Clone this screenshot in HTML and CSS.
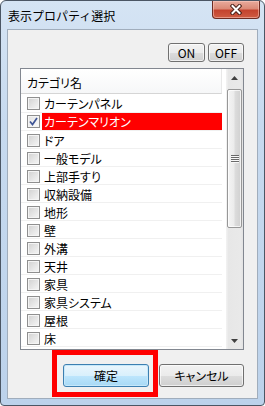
FILE: index.html
```html
<!DOCTYPE html>
<html lang="ja">
<head>
    <meta charset="UTF-8">
    <meta name="viewport" content="width=device-width, initial-scale=1.0">
    <title>表示プロパティ選択</title>
    <link rel="stylesheet" href="styles.css">
</head>
<body>
    <div class="window">
        <div class="titlebar">
            <span class="title">表示プロパティ選択</span>
            <div class="close">
                <svg width="12" height="11" viewBox="0 0 12 11">
                    <path d="M2.5 2 L9.5 9 M9.5 2 L2.5 9" stroke="#4a2018" stroke-width="4" stroke-linecap="square" fill="none"/>
                    <path d="M2.5 2 L9.5 9 M9.5 2 L2.5 9" stroke="#ffffff" stroke-width="2" stroke-linecap="square" fill="none"/>
                </svg>
            </div>
        </div>
        <div class="client">
            <div class="toolbar">
                <button type="button" class="btn btn-on">ON</button>
                <button type="button" class="btn btn-off">OFF</button>
            </div>
            <div class="listbox">
                <div class="list">
                    <div class="list-header">カテゴリ名</div>
                    <div class="row"><span class="check"></span><span class="label">カーテンパネル</span></div>
                    <div class="row selected">
                        <span class="check checked">
                            <svg width="11" height="11" viewBox="0 0 11 11"><path d="M2 5.5 L4.5 8.5 L9 2" stroke="#3f5596" stroke-width="1.7" fill="none"/></svg>
                        </span>
                        <span class="label">カーテンマリオン</span>
                    </div>
                    <div class="row"><span class="check"></span><span class="label">ドア</span></div>
                    <div class="row"><span class="check"></span><span class="label">一般モデル</span></div>
                    <div class="row"><span class="check"></span><span class="label">上部手すり</span></div>
                    <div class="row"><span class="check"></span><span class="label">収納設備</span></div>
                    <div class="row"><span class="check"></span><span class="label">地形</span></div>
                    <div class="row"><span class="check"></span><span class="label">壁</span></div>
                    <div class="row"><span class="check"></span><span class="label">外溝</span></div>
                    <div class="row"><span class="check"></span><span class="label">天井</span></div>
                    <div class="row"><span class="check"></span><span class="label">家具</span></div>
                    <div class="row"><span class="check"></span><span class="label">家具システム</span></div>
                    <div class="row"><span class="check"></span><span class="label">屋根</span></div>
                    <div class="row"><span class="check"></span><span class="label">床</span></div>
                    <div class="row row-empty"></div>
                </div>
                <div class="scrollbar">
                    <div class="sb-btn">
                        <svg width="7" height="4" viewBox="0 0 7 4"><path d="M0 4 L3.5 0 L7 4 Z" fill="#404040"/></svg>
                    </div>
                    <div class="thumb"><span class="grip"></span></div>
                    <div class="track"></div>
                    <div class="sb-btn">
                        <svg width="7" height="4" viewBox="0 0 7 4"><path d="M0 0 L7 0 L3.5 4 Z" fill="#404040"/></svg>
                    </div>
                </div>
            </div>
            <div class="actions">
                <button type="button" class="btn btn-default">確定</button>
                <button type="button" class="btn btn-cancel">キャンセル</button>
            </div>
            <div class="mark"></div>
        </div>
    </div>
</body>
</html>
```

FILE: styles.css
```css
/* Základ okna */
* {
    margin: 0;
    padding: 0;
    box-sizing: border-box;
}
body {
    font-family: "Noto Sans CJK JP", sans-serif;
    font-size: 12px;
    color: #000;
    background-color: #fff;
}
.window {
    width: 265px;
    height: 406px;
    border: 1px solid #4b5664;
    border-radius: 6px 6px 4px 4px;
    background: linear-gradient(180deg, #d5e4f4 0%, #c7daef 30%, #bcd2eb 100%);
    display: flex;
    flex-direction: column;
    overflow: hidden;
}
.titlebar {
    height: 28px;
    display: flex;
    justify-content: space-between;
    padding-left: 7px;
    padding-right: 4px;
}
.title {
    line-height: 28px;
    padding-top: 1px;
    font-size: 12px;
    color: #000;
}
.close {
    width: 48px;
    height: 18px;
    border: 1px solid #6e2c22;
    border-top: none;
    border-radius: 0 0 4px 4px;
    background: linear-gradient(180deg, #e8ab9c 0%, #db8a77 45%, #c4432e 55%, #cf5c43 100%);
    box-shadow: inset 0 0 0 1px rgba(255, 210, 200, 0.5);
    display: flex;
    align-items: center;
    justify-content: center;
}
.client {
    position: relative;
    height: 370px;
    margin: 0 6px;
    border: 1px solid #a0adbc;
    background-color: #f0f0f0;
    padding: 13px 13px 0 12px;
}
.toolbar {
    display: flex;
    justify-content: flex-end;
    gap: 3px;
}
.btn {
    font-family: "Noto Sans CJK JP", sans-serif;
    font-size: 12px;
    color: #000;
    border: 1px solid #707070;
    border-radius: 3px;
    background: linear-gradient(180deg, #f2f2f2 0%, #ebebeb 50%, #dddddd 50%, #cfcfcf 100%);
    box-shadow: inset 0 0 0 1px rgba(255, 255, 255, 0.65);
    cursor: pointer;
}
.btn-on {
    width: 37px;
    height: 19px;
    line-height: 16px;
}
.btn-off {
    width: 36px;
    height: 19px;
    line-height: 16px;
}
.listbox {
    margin-top: 6px;
    height: 282px;
    border: 1px solid #828790;
    background-color: #fff;
    display: flex;
}
.list {
    flex: 1;
    overflow: hidden;
}
.list-header {
    width: 201px;
    height: 25px;
    padding: 4px 0 0 6px;
    line-height: 19px;
    border-bottom: 1px solid #d5d5d5;
    border-right: 1px solid #e8e8e8;
    background: linear-gradient(180deg, #ffffff 0%, #f6f7f8 100%);
    font-feature-settings: "palt" 1;
}
.row {
    width: 201px;
    height: 18px;
    display: flex;
    padding-left: 6px;
}
.row + .row {
    border-top: 1px solid #f0f0f0;
}
.check {
    width: 13px;
    height: 13px;
    margin-top: 3px;
    border: 1px solid #8f8f8f;
    background: linear-gradient(135deg, #d0d0d0 0%, #e4e4e4 50%, #f6f6f6 100%);
    box-shadow: inset 0 0 0 1px #f4f4f4;
    flex-shrink: 0;
}
.check.checked {
    margin-top: 2px;
    background: linear-gradient(135deg, #e2e2e2 0%, #f2f2f2 60%, #fafafa 100%);
}
.check svg {
    display: block;
}
.label {
    flex: 1;
    margin-left: 2px;
    padding-left: 2px;
    line-height: 18px;
    padding-top: 1px;
    white-space: nowrap;
    font-feature-settings: "palt" 1;
}
.row.selected .label {
    background-color: #ff0000;
    color: #fff;
    padding-top: 0;
    line-height: 17px;
}
.scrollbar {
    width: 17px;
    display: flex;
    flex-direction: column;
    background: linear-gradient(90deg, #f3f3f3 0%, #e7e7e7 15%, #e9e9e9 85%, #e3e3e3 100%);
}
.sb-btn {
    height: 17px;
    display: flex;
    align-items: center;
    justify-content: center;
}
.thumb {
    height: 139px;
    margin: 3px 1px 0 1px;
    border: 1px solid #979797;
    border-radius: 2px;
    background: linear-gradient(90deg, #f4f4f4 0%, #ececec 45%, #dcdcdc 55%, #d0d0d0 100%);
    box-shadow: inset 0 0 0 1px rgba(255, 255, 255, 0.7);
    display: flex;
    align-items: center;
    justify-content: center;
}
.grip {
    width: 8px;
    height: 8px;
    background: repeating-linear-gradient(180deg, #6a6a6a 0px, #6a6a6a 1px, #f8f8f8 1px, #f8f8f8 2px);
}
.track {
    flex: 1;
}
.actions {
    display: flex;
    justify-content: flex-end;
    gap: 10px;
    margin-top: 14px;
}
.btn-default {
    width: 86px;
    height: 23px;
    border-color: #3c7fb1;
    background: linear-gradient(180deg, #eaf6fd 0%, #d9f0fc 50%, #bee6fd 50%, #a7d9f5 100%);
    box-shadow: inset 0 0 0 1px #c6e8fa;
}
.btn-cancel {
    width: 85px;
    height: 23px;
    font-feature-settings: "palt" 1;
}
/* červené zvýraznění */
.mark {
    position: absolute;
    left: 44px;
    top: 320px;
    width: 106px;
    height: 47px;
    border: 5px solid #ff0000;
}
```
